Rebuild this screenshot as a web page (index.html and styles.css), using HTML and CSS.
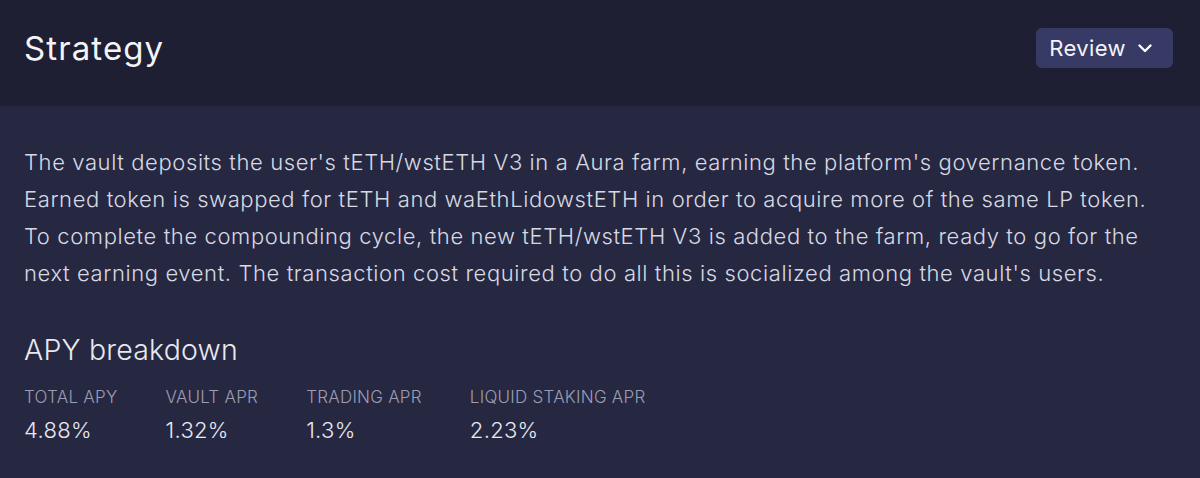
FILE: index.html
```html
<!DOCTYPE html>
<html>
<head>
<meta charset="utf-8">
<link rel="stylesheet" href="styles.css">
</head>
<body>
<div class="card">
  <div class="header">
    <h1 class="title">Strategy</h1>
    <button class="review">Review
      <svg class="chev" width="16" height="16" viewBox="0 0 16 16"><path d="M2.5 5.5 L8 11 L13.5 5.5" fill="none" stroke="#fff" stroke-width="2.4" stroke-linecap="round" stroke-linejoin="round"/></svg>
    </button>
  </div>
  <div class="content">
    <p class="desc">The vault deposits the user's tETH/wstETH V3 in a Aura farm, earning the platform's governance token. Earned token is swapped for tETH and waEthLidowstETH in order to acquire more of the same LP token. To complete the compounding cycle, the new tETH/wstETH V3 is added to the farm, ready to go for the next earning event. The transaction cost required to do all this is socialized among the vault's users.</p>
    <h2 class="sub">APY breakdown</h2>
    <div class="stats">
      <div class="stat"><div class="label">TOTAL APY</div><div class="value">4.88%</div></div>
      <div class="stat"><div class="label">VAULT APR</div><div class="value">1.32%</div></div>
      <div class="stat"><div class="label">TRADING APR</div><div class="value">1.3%</div></div>
      <div class="stat"><div class="label">LIQUID STAKING APR</div><div class="value">2.23%</div></div>
    </div>
  </div>
</div>
</body>
</html>
```
FILE: styles.css
```css
html, body { margin: 0; padding: 0; }
body { background: #262842; font-family: Inter, "Noto Sans", sans-serif; color: #e8e8f0; }
.card { width: 1200px; height: 478px; background: #262842; }
.header { height: 106px; background: #1e1f33; display: flex; align-items: center; justify-content: space-between; padding: 0 27px 10px 24px; box-sizing: border-box; }
.title { margin: 0; font-size: 33px; font-weight: 400; color: #f4f4f8; letter-spacing: 1.1px; }
.review { display: flex; align-items: center; gap: 11px; height: 40px; padding: 0 20px 0 13px; background: #363a64; border: none; border-radius: 6px; color: #f4f4f8; font-family: inherit; font-size: 22px; font-weight: 400; letter-spacing: 0.4px; }
.content { padding: 38px 24px 0 24px; }
.desc { margin: 0; font-size: 22px; font-weight: 300; line-height: 37px; color: #d8d9e3; letter-spacing: 0.6px; max-width: 1140px; }
.sub { margin: 40px 0 0 0; font-size: 28.5px; font-weight: 300; color: #e8e8f0; letter-spacing: 0.2px; }
.stats { display: flex; gap: 48px; margin-top: 20px; }
.label { font-size: 17px; font-weight: 300; color: #9b9db3; letter-spacing: 0.25px; }
.value { font-size: 22px; font-weight: 300; color: #e8e8f0; margin-top: 10px; letter-spacing: 0.3px; }
```
